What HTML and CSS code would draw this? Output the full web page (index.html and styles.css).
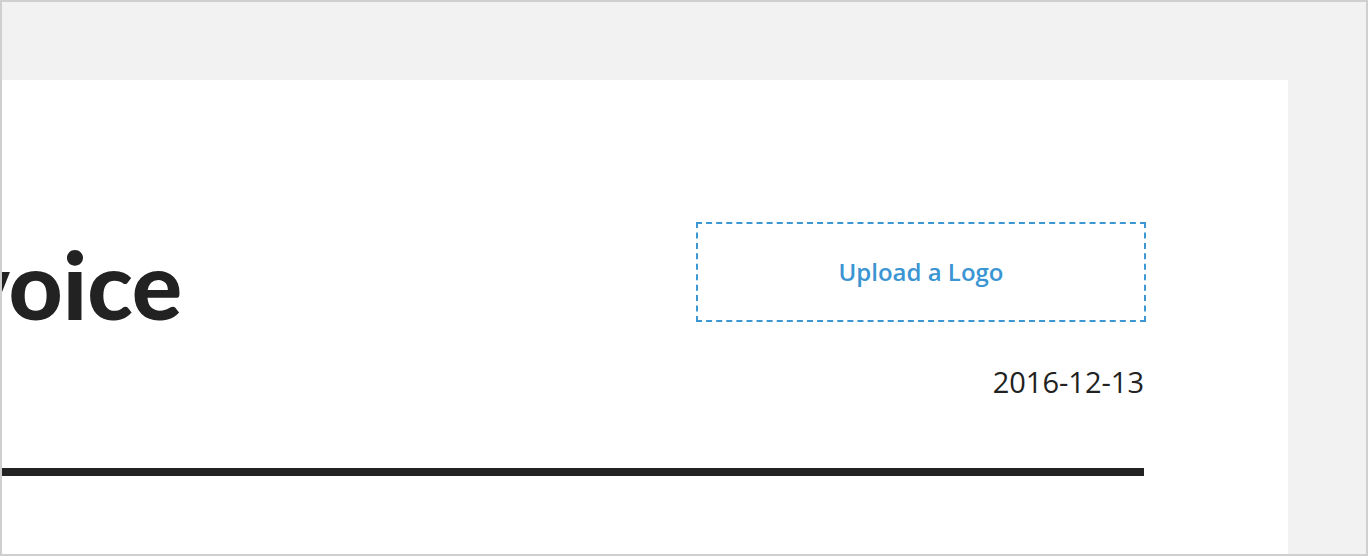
FILE: index.html
```html
<!DOCTYPE html>
<html>
<head>
<meta charset="utf-8">
<link rel="stylesheet" href="styles.css">
</head>
<body>
<div class="frame">
  <div class="sheet">
    <div class="header">
      <h1 class="title">Invoice</h1>
      <div class="meta">
        <div class="logo-box">Upload a Logo</div>
        <div class="date">2016-12-13</div>
      </div>
    </div>
    <div class="rule"></div>
  </div>
</div>
</body>
</html>
```
FILE: styles.css
```css
html, body {
  margin: 0;
  padding: 0;
}
body {
  width: 1368px;
  height: 556px;
  overflow: hidden;
}
.frame {
  box-sizing: border-box;
  width: 1368px;
  height: 556px;
  border: 2px solid #cfcfcf;
  background: #f2f2f2;
  overflow: hidden;
  padding-top: 78px;
}
.sheet {
  box-sizing: border-box;
  width: 1408px;
  height: 500px;
  margin-left: -122px;
  background: #fff;
  padding: 142px 144px 0 0;
}
.header {
  display: flex;
  justify-content: space-between;
  align-items: flex-start;
}
.title {
  margin: 6px 0 0 0;
  font-family: "Lato", sans-serif;
  font-weight: 900;
  font-size: 94px;
  line-height: 1.2;
  color: #222;
}
.meta {
  display: flex;
  flex-direction: column;
  align-items: flex-end;
}
.logo-box {
  box-sizing: border-box;
  width: 450px;
  height: 100px;
  margin-right: -2px;
  border: 2px dashed #3d97d3;
  display: flex;
  align-items: center;
  justify-content: center;
  padding-bottom: 2px;
  font-family: "Open Sans", sans-serif;
  font-weight: 600;
  font-size: 24px;
  color: #3a95d2;
}
.date {
  margin-top: 40px;
  font-family: "Open Sans", sans-serif;
  font-size: 29px;
  line-height: 40px;
  color: #222;
}
.rule {
  margin-top: 66px;
  height: 8px;
  background: #222;
}
```
